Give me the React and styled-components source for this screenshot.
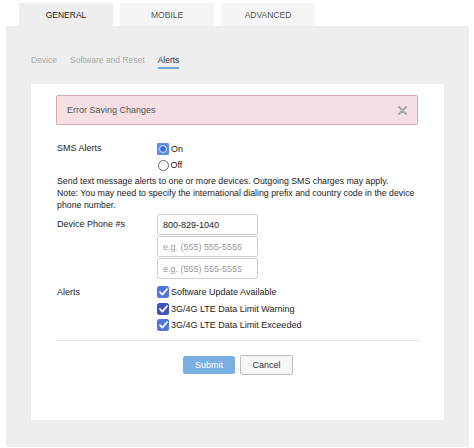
import React from 'react'
import styled, { createGlobalStyle } from 'styled-components'

const GlobalStyle = createGlobalStyle`
  body {
    margin: 0;
    background: #fff;
    font-family: 'Liberation Sans', Arial, sans-serif;
    color: #333;
  }
`

const Page = styled.div`
  width: 474px;
  height: 448px;
  padding: 3px 5px 0 6px;
  box-sizing: border-box;
  overflow: hidden;
`

const TabBar = styled.div`
  display: flex;
  gap: 7px;
  padding-left: 13px;
`

const Tab = styled.div`
  width: 94px;
  height: 23px;
  display: flex;
  align-items: center;
  justify-content: center;
  font-size: 8.5px;
  color: ${p => (p.active ? '#222' : '#555')};
  background: ${p => (p.active ? '#eeeeee' : '#f5f5f5')};
`

const Panel = styled.div`
  background: #eeeeee;
  padding: 26px 25px 27px;
`

const SubTabs = styled.div`
  display: flex;
  gap: 13px;
  height: 16px;
  margin-bottom: 16px;
`

const SubTab = styled.div`
  font-size: 8.5px;
  line-height: 16px;
  color: ${p => (p.active ? '#333' : '#aaa')};
  border-bottom: 2px solid ${p => (p.active ? '#74a6d9' : 'transparent')};
  height: 15px;
`

const Card = styled.div`
  background: #fff;
  height: 336px;
  box-sizing: border-box;
  padding: 11px 24px 0 25px;
  display: flex;
  flex-direction: column;
`

const ErrorBox = styled.div`
  height: 30px;
  box-sizing: border-box;
  background: #f6e0e3;
  border: 1px solid #dcaab0;
  border-radius: 2px;
  display: flex;
  align-items: center;
  justify-content: space-between;
  padding: 0 10px 0 10px;
  font-size: 9px;
  color: #555;
  margin-right: 2px;
`

const Row = styled.div`
  display: flex;
  margin-top: ${p => p.gap || 0}px;
`

const Label = styled.div`
  width: 100px;
  padding-left: 1px;
  font-size: 9px;
  line-height: ${p => p.lh || 16}px;
  color: #222;
`

const Options = styled.div`
  display: flex;
  flex-direction: column;
  gap: ${p => p.gap || 0}px;
`

const Option = styled.label`
  display: flex;
  align-items: center;
  gap: 2px;
  height: ${p => p.h || 16}px;
  font-size: 9px;
  color: #222;
`

const RadioFocus = styled.span`
  width: 12px;
  height: 12px;
  border-radius: 1px;
  background: #5b8fe6;
  display: flex;
  align-items: center;
  justify-content: center;
  span {
    width: 6px;
    height: 6px;
    border-radius: 50%;
    background: #3a6fe0;
    border: 1.5px solid #dfe9fb;
  }
`

const Radio = styled.span`
  width: 11px;
  height: 11px;
  border-radius: 50%;
  border: 1px solid #666;
  background: #fff;
  box-sizing: border-box;
  margin-left: 0.5px;
`

const Check = styled.span`
  width: 12px;
  height: 12px;
  border-radius: 2.5px;
  background: ${p => (p.dark ? '#3d55b8' : '#5075dc')};
  display: flex;
  align-items: center;
  justify-content: center;
`

const Note = styled.p`
  margin: 2px -4px 0 1px;
  font-size: 8.8px;
  line-height: 12px;
  color: #222;
`

const Input = styled.input`
  width: 101px;
  height: 21px;
  box-sizing: border-box;
  border: 1px solid #cfcfcf;
  border-radius: 2px;
  padding: 0 5px;
  font-family: inherit;
  font-size: 9px;
  color: #222;
  outline: none;
  &::placeholder {
    color: #9a9a9a;
  }
`

const Divider = styled.hr`
  border: 0;
  border-top: 1px solid #e6e6e6;
  margin: 6px 0 0;
`

const Buttons = styled.div`
  display: flex;
  justify-content: center;
  align-items: center;
  gap: 5px;
  margin-top: 14px;
`

const Button = styled.button`
  font-family: inherit;
  font-size: 9px;
  border-radius: 2px;
  cursor: pointer;
  width: ${p => (p.primary ? 52 : 53)}px;
  height: ${p => (p.primary ? 18 : 20)}px;
  color: ${p => (p.primary ? '#fff' : '#333')};
  background: ${p => (p.primary ? '#7aafe4' : '#f6f6f6')};
  border: 1px solid ${p => (p.primary ? '#7aafe4' : '#bdbdbd')};
`

const CheckMark = () => (
  <svg width="9" height="8" viewBox="0 0 9 8">
    <path d="M1 4.2 L3.4 6.6 L8 1.2" fill="none" stroke="#fff" strokeWidth="1.8" strokeLinecap="round" strokeLinejoin="round" />
  </svg>
)

const CloseIcon = () => (
  <svg width="9" height="9" viewBox="0 0 9 9">
    <path d="M1 1 L8 8 M8 1 L1 8" stroke="#a8a8a8" strokeWidth="2.2" strokeLinecap="round" />
  </svg>
)

const alerts = [
  { label: 'Software Update Available' },
  { label: '3G/4G LTE Data Limit Warning', dark: true },
  { label: '3G/4G LTE Data Limit Exceeded' },
]

export default function App() {
  return (
    <Page>
      <GlobalStyle />
      <TabBar>
        <Tab active>GENERAL</Tab>
        <Tab>MOBILE</Tab>
        <Tab>ADVANCED</Tab>
      </TabBar>
      <Panel>
        <SubTabs>
          <SubTab>Device</SubTab>
          <SubTab>Software and Reset</SubTab>
          <SubTab active>Alerts</SubTab>
        </SubTabs>
        <Card>
          <ErrorBox>
            <span>Error Saving Changes</span>
            <CloseIcon />
          </ErrorBox>
          <Row gap={15}>
            <Label lh={17}>SMS Alerts</Label>
            <Options>
              <Option h={17}>
                <RadioFocus>
                  <span />
                </RadioFocus>
                On
              </Option>
              <Option h={16}>
                <Radio />
                Off
              </Option>
            </Options>
          </Row>
          <Note>
            Send text message alerts to one or more devices. Outgoing SMS charges may apply.
            <br />
            Note: You may need to specify the international dialing prefix and country code in the device phone number.
          </Note>
          <Row gap={3}>
            <Label lh={21}>Device Phone #s</Label>
            <Options gap={1}>
              <Input defaultValue="800-829-1040" />
              <Input placeholder="e.g. (555) 555-5555" />
              <Input placeholder="e.g. (555) 555-5555" />
            </Options>
          </Row>
          <Row gap={5}>
            <Label lh={16.5}>Alerts</Label>
            <Options>
              {alerts.map(a => (
                <Option key={a.label} h={16.5}>
                  <Check dark={a.dark}>
                    <CheckMark />
                  </Check>
                  {a.label}
                </Option>
              ))}
            </Options>
          </Row>
          <Divider />
          <Buttons>
            <Button primary>Submit</Button>
            <Button>Cancel</Button>
          </Buttons>
        </Card>
      </Panel>
    </Page>
  )
}
